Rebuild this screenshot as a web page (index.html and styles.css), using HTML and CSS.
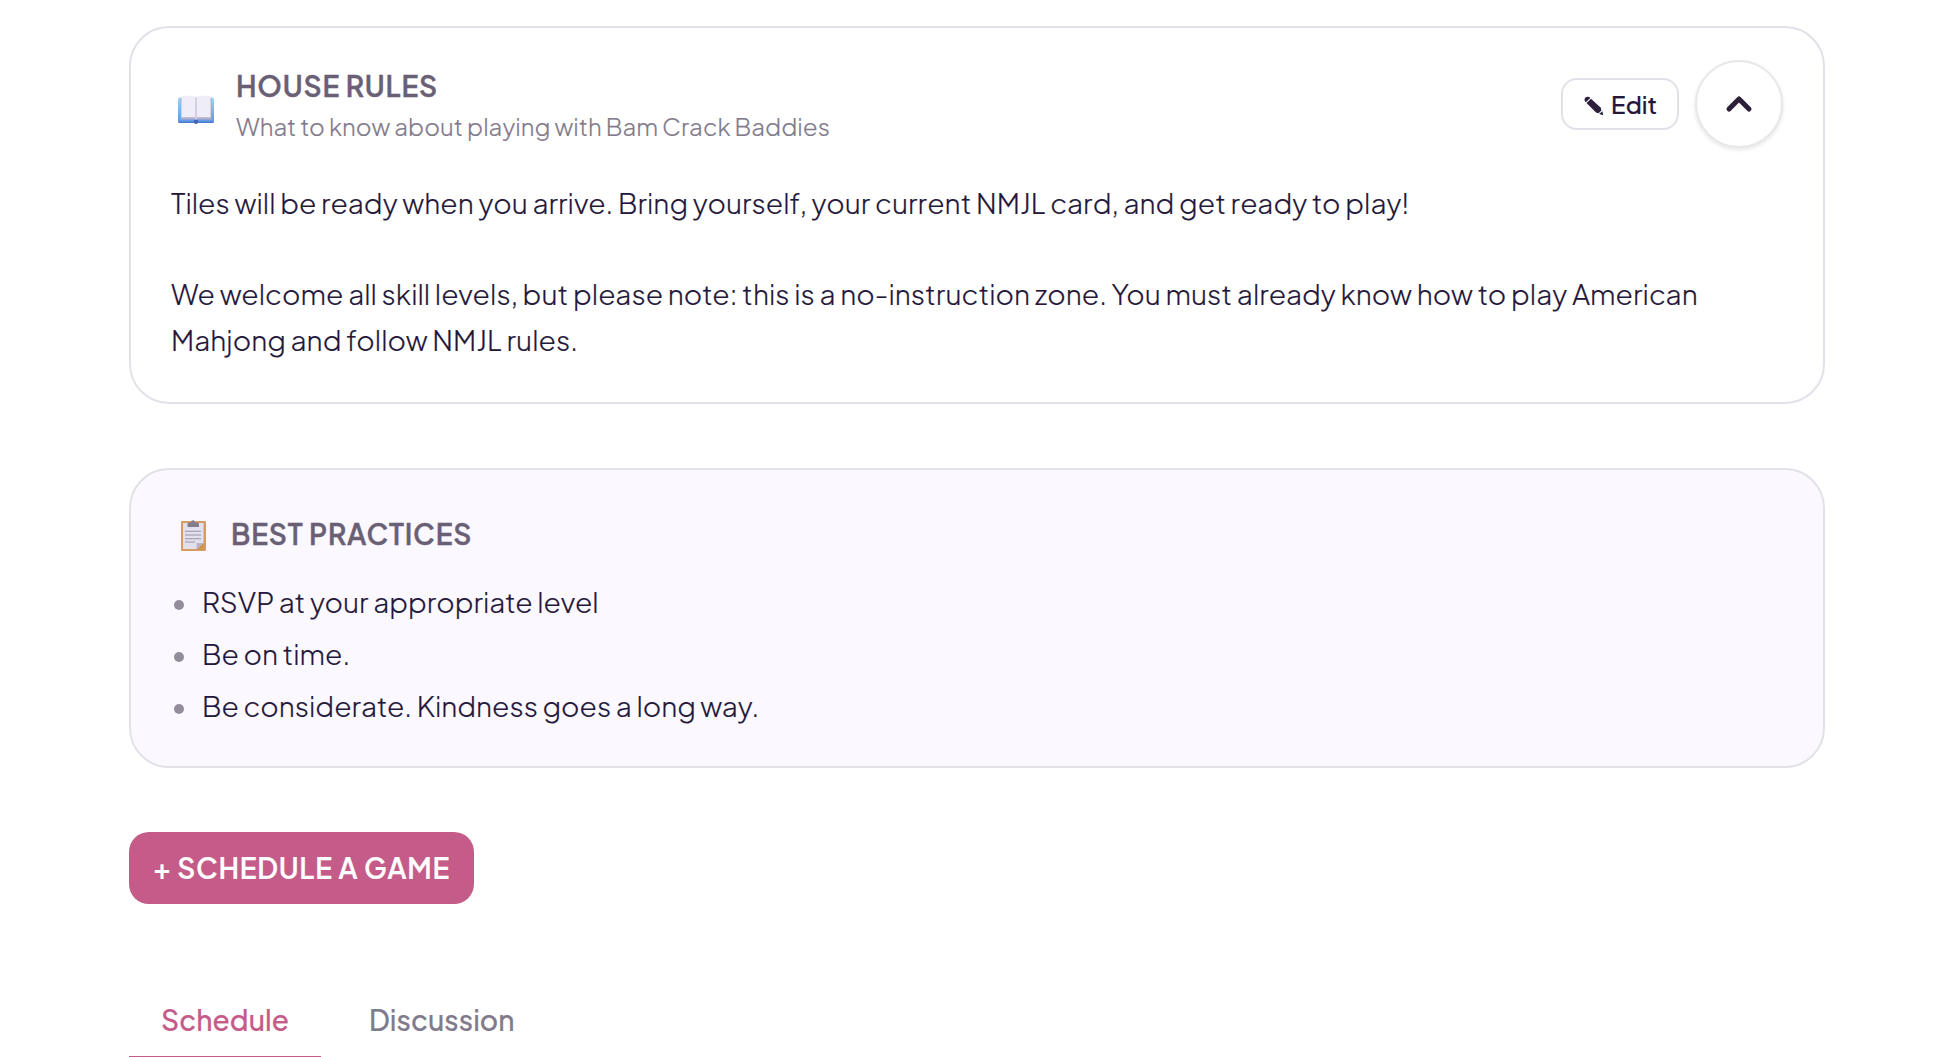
FILE: index.html
```
<!DOCTYPE html>
<html lang="en">
<head>
    <meta charset="UTF-8">
    <meta name="viewport" content="width=device-width, initial-scale=1.0">
    <title>Bam Crack Baddies</title>
    <link rel="stylesheet" href="styles.css">
</head>
<body>
    <main class="page">
        <section class="card rules">
            <div class="rules-header">
                <svg class="book-icon" viewBox="0 0 36 30">
                    <defs>
                        <linearGradient id="cover" x1="0" y1="0" x2="0" y2="1">
                            <stop offset="0" stop-color="#9bd3f2"/>
                            <stop offset="1" stop-color="#5c98e6"/>
                        </linearGradient>
                    </defs>
                    <rect x="0" y="2.5" width="36" height="25.5" rx="1.8" fill="url(#cover)"/>
                    <path d="M0.5 26.4H35.5V27Q35.5 28 34.5 28H1.5Q0.5 28 0.5 27Z" fill="#4a7cd2"/>
                    <path d="M2.5 4L3.5 22.5L2 24.5H34L32.5 22.5L33.5 4Z" fill="#b5aecb"/>
                    <path d="M3 2.5Q3 .8 5 .8H15.500Q17.500 .8 18 2.500Q18.500 .8 20.500 .8H31Q33 .8 33 2.500V22.300H3Z" fill="#efedf8"/>
                    <path d="M3 3V22.500H4V3ZM32 3V22.500H33V3Z" fill="#d5cfe0"/>
                    <path d="M17 2.500H19V24H17Z" fill="#d5cee6"/>
                    <path d="M16 25H20V28Q18 30 16 28Z" fill="#4760b8"/>
                </svg>
                <div class="rules-text">
                    <h2>HOUSE RULES</h2>
                    <p class="subtitle">What to know about playing with Bam Crack Baddies</p>
                </div>
                <div class="actions">
                    <button class="edit-btn">
                        <svg class="pencil" viewBox="0 0 20 20">
                            <path d="M.9 5.200Q-.1 3.300 1.500 1.600Q3.300 0 5.300 1.100L6.300 2L1.800 6.200Z"/>
                            <path d="M2.500 6.900L7 2.700L16.800 11.800L17.400 14.500L14.500 17.200L12 16.400Z"/>
                            <path d="M18.300 15.200L19.300 19.300L15.200 18Z"/>
                        </svg>
                        <span>Edit</span>
                    </button>
                    <button class="toggle-btn" aria-label="Collapse">
                        <svg viewBox="0 0 28 18">
                            <path d="M4 14L14 4L24 14"/>
                        </svg>
                    </button>
                </div>
            </div>
            <div class="rules-body">
                <p>Tiles will be ready when you arrive. Bring yourself, your current NMJL card, and get ready to play!</p>
                <p>We welcome all skill levels, but please note: this is a no-instruction zone. You must already know how to play American Mahjong and follow NMJL rules.</p>
            </div>
        </section>

        <section class="card practices">
            <div class="practices-header">
                <svg class="clipboard-icon" viewBox="0 0 25 31">
                    <rect x="0" y="1" width="25" height="30" rx="1" fill="#d59c64"/>
                    <path d="M2 3H22.500V23.500L16 29H2Z" fill="#e4dfed"/>
                    <path d="M15.500 23H22.500L15.500 29.500Z" fill="#bcb4cb"/>
                    <path d="M22.500 23V29.500H15.500Z" fill="#cb925d"/>
                    <path d="M6.500 7V4Q6.500 2.500 8 2.500H10Q10 .3 12 .3Q14 .3 14 2.500H16.500Q18 2.500 18 4V7Z" fill="#837c8c"/>
                    <path d="M4 11.300H20M4 15H20M4 18.700H20M4 22H14" fill="none" stroke="#9a93aa" stroke-width="1.100"/>
                </svg>
                <h2>BEST PRACTICES</h2>
            </div>
            <ul>
                <li>RSVP at your appropriate level</li>
                <li>Be on time.</li>
                <li>Be considerate. Kindness goes a long way.</li>
            </ul>
        </section>

        <button class="schedule-btn">+ SCHEDULE A GAME</button>

        <nav class="tabs">
            <div class="tab active">Schedule</div>
            <div class="tab">Discussion</div>
        </nav>
    </main>
</body>
</html>
```
FILE: styles.css
```
* {
    box-sizing: border-box;
}
html {
    overflow: hidden;
}
body {
    margin: 0;
    height: 1057px;
    overflow: hidden;
    font-family: "Plus Jakarta Sans", Inter, sans-serif;
    font-size: 28px;
    background-color: #fff;
    color: #24173a;
    -webkit-text-stroke: 0.2px;
}
h2, p, ul {
    margin: 0;
    padding: 0;
}
h2 {
    font-size: 28px;
    font-weight: 600;
    line-height: 40px;
    letter-spacing: 0.8px;
    color: #6a6076;
    -webkit-text-stroke: 0.4px;
}
button {
    font-family: inherit;
    padding: 0;
}
svg {
    display: block;
}
.page {
    width: 1696px;
    margin-left: 129px;
    padding-top: 26px;
}
.card {
    border: 2px solid #e2e1e9;
    border-radius: 40px;
    padding: 0 40px;
}
.rules {
    height: 378px;
    padding-top: 32px;
}
.rules-header {
    display: flex;
    align-items: flex-start;
    height: 88px;
}
.book-icon {
    width: 36px;
    height: 30px;
    margin: 35px 22px 0 7px;
}
.rules-text {
    padding-top: 6px;
}
.subtitle {
    font-size: 24px;
    font-weight: 300;
    line-height: 40px;
    letter-spacing: 0.04px;
    color: #817a8b;
}
.actions {
    display: flex;
    align-items: center;
    gap: 16px;
    margin-left: auto;
}
.edit-btn {
    display: flex;
    align-items: center;
    justify-content: center;
    gap: 7px;
    width: 118px;
    height: 52px;
    padding-left: 1px;
    border: 2px solid #e2e1e9;
    border-radius: 16px;
    background-color: #fff;
    color: #24173a;
    font-size: 24px;
    font-weight: 500;
}
.pencil {
    width: 20px;
    height: 20px;
    fill: #2b1f3a;
    margin-top: 3px;
}
.toggle-btn {
    display: flex;
    align-items: center;
    justify-content: center;
    width: 88px;
    height: 88px;
    border: 2px solid #e8e7e9;
    border-radius: 50%;
    background-color: #fff;
    box-shadow: 0 2px 4px rgba(0, 0, 0, 0.1);
}
.toggle-btn svg {
    width: 28px;
    height: 18px;
    fill: none;
    stroke: #2b1f3a;
    stroke-width: 5;
    stroke-linecap: round;
    stroke-linejoin: round;
}
.rules-body {
    margin-top: 32px;
    font-weight: 300;
    line-height: 45.5px;
    letter-spacing: 0.045px;
}
.rules-body p + p {
    margin-top: 45.5px;
}
.practices {
    height: 300px;
    margin-top: 64px;
    padding-top: 44px;
    background-color: #fbf9ff;
}
.practices-header {
    display: flex;
    align-items: center;
    height: 40px;
}
.clipboard-icon {
    width: 25px;
    height: 31px;
    margin: 2px 25px 0 10px;
}
ul {
    margin-top: 21px;
    list-style: none;
}
li {
    display: flex;
    align-items: center;
    height: 52px;
    font-weight: 300;
}
li::before {
    content: "";
    width: 10px;
    height: 10px;
    margin: 7px 18px 0 3px;
    border-radius: 50%;
    background-color: #938c9b;
}
.schedule-btn {
    display: block;
    width: 345px;
    height: 72px;
    margin-top: 64px;
    padding-bottom: 2px;
    border: none;
    border-radius: 20px;
    background-color: #c45b88;
    color: #fff;
    font-size: 28px;
    font-weight: 600;
    letter-spacing: 0.7px;
}
.tabs {
    display: flex;
    gap: 16px;
    margin-top: 80px;
}
.tab {
    height: 75px;
    padding: 16px 32px 0;
    font-weight: 500;
    line-height: 40px;
    letter-spacing: 0.1px;
    color: #817a8b;
}
.tab.active {
    width: 192px;
    color: #c45b88;
    border-bottom: 3px solid #c45b88;
}
```
